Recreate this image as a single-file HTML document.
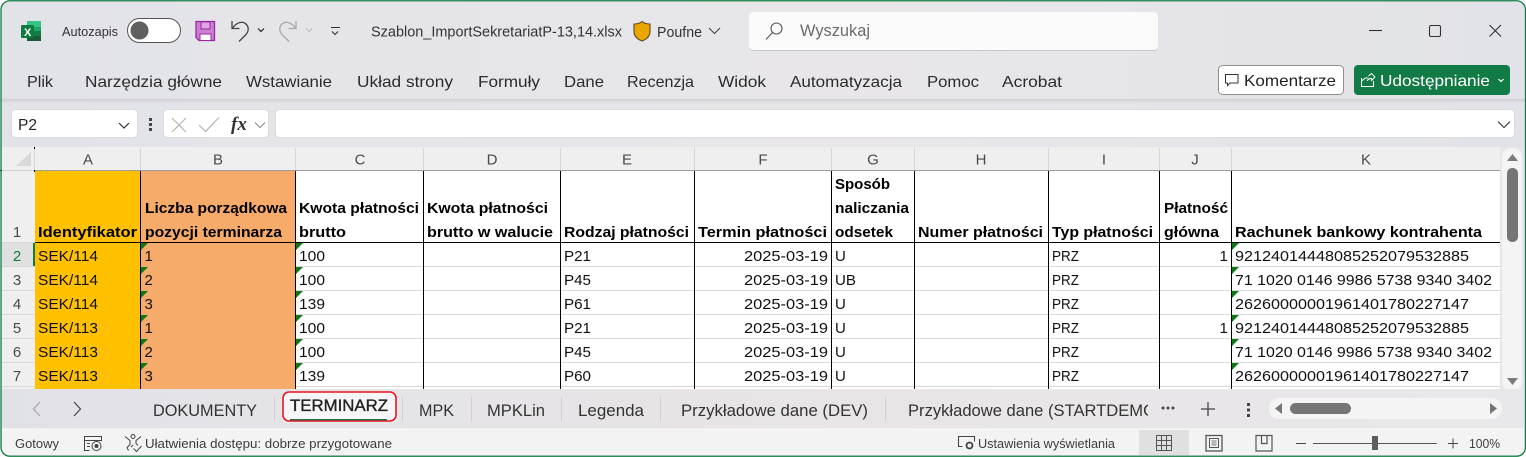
<!DOCTYPE html>
<html lang="pl"><head><meta charset="utf-8"><title>Excel</title>
<style>
html,body{margin:0;padding:0;background:#fff;overflow:hidden}
svg{display:block}
text{font-family:"Liberation Sans",sans-serif;fill:#262626;white-space:pre}
.r{font-size:16px;fill:#2b2b2b}
.g{font-size:15px;fill:#111}
.b{font-size:15px;font-weight:bold;fill:#000}
.h{font-size:15px;fill:#4a4a4a;text-anchor:middle}
.t{font-size:16.5px;fill:#333}
.s{font-size:13px;fill:#3c3c3c}
</style></head><body>
<svg xmlns="http://www.w3.org/2000/svg" width="1526" height="457" viewBox="0 0 1526 457">
<defs>
<linearGradient id="bg" x1="0" y1="0" x2="1" y2="0"><stop offset="0" stop-color="#E2E3E9"/><stop offset=".55" stop-color="#E8E6E9"/><stop offset="1" stop-color="#E2E3E8"/></linearGradient>
<linearGradient id="tb" x1="0" y1="0" x2="1" y2="0"><stop offset="0" stop-color="#E1E2E8"/><stop offset=".55" stop-color="#E9E5E6"/><stop offset="1" stop-color="#E8E7EA"/></linearGradient>
<linearGradient id="sh" x1="0" y1="0" x2="0" y2="1"><stop offset="0" stop-color="#cfcfd3"/><stop offset="1" stop-color="#E6E6EA"/></linearGradient>
<clipPath id="tc"><rect x="890" y="395" width="258" height="30"/></clipPath>
</defs>
<rect width="1526" height="457" fill="#fff"/>
<rect x="1" y="1" width="1524" height="455" rx="9" fill="url(#bg)"/>
<!-- ribbon shadow -->
<rect x="1" y="99" width="1524" height="5" fill="url(#sh)"/>

<!-- Excel logo -->
<g>
<rect x="27" y="21" width="14" height="20" rx="1" fill="#21A366"/>
<rect x="27" y="21" width="14" height="6" fill="#33C481"/>
<rect x="27" y="31" width="14" height="5" fill="#107C41"/>
<rect x="27" y="36" width="14" height="5" fill="#185C37"/>
<rect x="21" y="25" width="13" height="13" rx="1" fill="#0F7B42"/>
<text x="24" y="36" style="font-size:11px;font-weight:bold;fill:#fff">X</text>
</g>
<text x="62" y="36" textLength="56" lengthAdjust="spacingAndGlyphs" style="font-size:13px;fill:#333">Autozapis</text>
<!-- toggle -->
<rect x="127.5" y="18.5" width="53" height="24" rx="12" fill="#fff" stroke="#555" stroke-width="1"/>
<circle cx="139.5" cy="30.5" r="9" fill="#606060"/>
<!-- save -->
<path d="M196 21.5H214.5V40.5H199L196 37.5Z" fill="#CF7DD3" stroke="#9A28A2" stroke-width="1.3"/>
<rect x="201" y="22" width="9" height="7" fill="#DFA8E2" stroke="#9A28A2" stroke-width="1"/>
<rect x="200" y="34" width="11" height="6.5" fill="#fff" stroke="#9A28A2" stroke-width="1"/>
<!-- undo -->
<path d="M232 21v7.500h7.500" fill="none" stroke="#444" stroke-width="1.300"/>
<path d="M232.500 28c4-5.500 10-7.500 13.500-4 3.500 3.500 2.500 8-.5 11l-6.500 6.500" fill="none" stroke="#444" stroke-width="1.300"/>
<path d="M258 28.500l3 3 3-3" fill="none" stroke="#222" stroke-width="1.200"/>
<!-- redo -->
<path d="M296 21v7.500h-7.500" fill="none" stroke="#a8a8a8" stroke-width="1.300"/>
<path d="M295.500 28c-4-5.500-10-7.500-13.500-4-3.500 3.500-2.500 8 .5 11l6.500 6.500" fill="none" stroke="#a8a8a8" stroke-width="1.300"/>
<path d="M306 28.500l3 3 3-3" fill="none" stroke="#c0c0c0" stroke-width="1.200"/>
<!-- customize -->
<path d="M331 27.500h9M332 31.500l3 3 3-3" fill="none" stroke="#333" stroke-width="1.100"/>

<text x="371" y="36.500" textLength="251" lengthAdjust="spacingAndGlyphs" style="font-size:15px;fill:#333">Szablon_ImportSekretariatP-13,14.xlsx</text>
<!-- shield -->
<path d="M642 21.500c2 1.700 4.500 2.500 8 2.500v7.500c0 5-3.500 7.800-8 9.500-4.500-1.700-8-4.500-8-9.500V24c3.500 0 6-.8 8-2.500Z" fill="#EBA600" stroke="#5a4a20" stroke-width="1.100"/>
<text x="657" y="37" textLength="45" lengthAdjust="spacingAndGlyphs" style="font-size:15px;fill:#333">Poufne</text>
<path d="M709 28l5.500 5.500 5.500-5.500" fill="none" stroke="#444" stroke-width="1.100"/>

<!-- search -->
<rect x="749" y="12.500" width="409" height="38.500" rx="4" fill="#c9c9cd"/>
<rect x="749" y="12" width="409" height="38" rx="4" fill="#FAFAFA"/>
<circle cx="776.500" cy="28.500" r="5.500" fill="none" stroke="#555" stroke-width="1.100"/>
<path d="M772.500 32.500l-6.500 7" stroke="#555" stroke-width="1.100" fill="none"/>
<text x="800" y="36" textLength="70" lengthAdjust="spacingAndGlyphs" style="font-size:17px;fill:#6b6b6b">Wyszukaj</text>

<!-- window controls -->
<path d="M1369 30.500h13" stroke="#333" stroke-width="1.100"/>
<rect x="1429.500" y="25.500" width="11" height="11" rx="1.500" fill="none" stroke="#333" stroke-width="1.100"/>
<path d="M1489.500 25l11.500 11.500M1501 25l-11.500 11.500" stroke="#333" stroke-width="1.100"/>

<!-- ribbon tabs -->
<text class="r" x="27" y="87" textLength="26" lengthAdjust="spacingAndGlyphs">Plik</text>
<text class="r" x="85" y="87" textLength="137" lengthAdjust="spacingAndGlyphs">Narzędzia główne</text>
<text class="r" x="246" y="87" textLength="86" lengthAdjust="spacingAndGlyphs">Wstawianie</text>
<text class="r" x="357" y="87" textLength="96" lengthAdjust="spacingAndGlyphs">Układ strony</text>
<text class="r" x="478" y="87" textLength="62" lengthAdjust="spacingAndGlyphs">Formuły</text>
<text class="r" x="564" y="87" textLength="40" lengthAdjust="spacingAndGlyphs">Dane</text>
<text class="r" x="627" y="87" textLength="67" lengthAdjust="spacingAndGlyphs">Recenzja</text>
<text class="r" x="718" y="87" textLength="48" lengthAdjust="spacingAndGlyphs">Widok</text>
<text class="r" x="790" y="87" textLength="112" lengthAdjust="spacingAndGlyphs">Automatyzacja</text>
<text class="r" x="927" y="87" textLength="52" lengthAdjust="spacingAndGlyphs">Pomoc</text>
<text class="r" x="1002" y="87" textLength="60" lengthAdjust="spacingAndGlyphs">Acrobat</text>

<!-- Komentarze -->
<rect x="1218.500" y="65.500" width="125" height="29" rx="4" fill="#fff" stroke="#8f8f8f"/>
<path d="M1225.500 74.500h12.500v8.500h-8l-2.500 2.500v-2.500h-2Z" fill="none" stroke="#333" stroke-width="1"/>
<text x="1244" y="86" textLength="92" lengthAdjust="spacingAndGlyphs" style="font-size:16px;fill:#222">Komentarze</text>
<!-- Udostepnianie -->
<rect x="1354" y="65" width="156" height="30" rx="4" fill="#127B45"/>
<path d="M1361.500 78v8.500h12V81M1361.500 81l4-3h3M1368.500 76l3-2.500 3.500 3.500-3.500 3.500v-2c-2 0-3.500.8-4.500 2.500" fill="none" stroke="#fff" stroke-width="1"/>
<text x="1380" y="86" textLength="110" lengthAdjust="spacingAndGlyphs" style="font-size:16px;fill:#fff">Udostępnianie</text>
<path d="M1498.500 79l2.500 2.500 2.500-2.500" fill="none" stroke="#fff" stroke-width="1.200"/>

<!-- formula bar -->
<rect x="11.500" y="109.500" width="126" height="28" rx="4" fill="#fff" stroke="#dcdcdc"/>
<text x="18" y="130" textLength="19" lengthAdjust="spacingAndGlyphs" style="font-size:16px;fill:#222">P2</text>
<path d="M119 123l5 5 5-5" fill="none" stroke="#333" stroke-width="1.200"/>
<rect x="149" y="118" width="3" height="3" fill="#444"/><rect x="149" y="123" width="3" height="3" fill="#444"/><rect x="149" y="128" width="3" height="3" fill="#444"/>
<rect x="163.500" y="109.500" width="105" height="28" rx="4" fill="#fff" stroke="#dcdcdc"/>
<path d="M172 118l14 14M186 118l-14 14" stroke="#b4b4b4" stroke-width="1.200"/>
<path d="M199 125l6.500 6.500 13.500-14" fill="none" stroke="#b4b4b4" stroke-width="1.200"/>
<text x="231" y="130" style="font-family:'Liberation Serif',serif;font-size:19px;font-style:italic;font-weight:bold;fill:#333">fx</text>
<path d="M255 122.500l5 5 5-5" fill="none" stroke="#888" stroke-width="1.100"/>
<rect x="275.500" y="109.500" width="1239" height="28" rx="4" fill="#fff" stroke="#dcdcdc"/>
<path d="M1498 121.500l6 6 6-6" fill="none" stroke="#333" stroke-width="1.100"/>

<!-- grid header -->
<rect x="2" y="147" width="1498" height="24" fill="#EFEFEF"/>
<rect x="2" y="171" width="33" height="218" fill="#EFEFEF"/>
<path d="M31 152v14H16Z" fill="#D9D9D9"/>
<rect x="2" y="243" width="32" height="24" fill="#E0E0E0"/>
<rect x="33" y="243" width="2" height="24" fill="#107C41"/>
<!-- cells -->
<rect x="35" y="171" width="1465" height="218" fill="#fff"/>
<rect x="35" y="171" width="106" height="218" fill="#FFC000"/>
<rect x="141" y="171" width="155" height="218" fill="#F7AB6A"/>
<!-- horizontal lines -->
<g fill="#D8D8D8">
<rect x="2" y="266" width="33" height="1"/><rect x="296" y="266" width="1204" height="1"/>
<rect x="2" y="290" width="33" height="1"/><rect x="296" y="290" width="1204" height="1"/>
<rect x="2" y="314" width="33" height="1"/><rect x="296" y="314" width="1204" height="1"/>
<rect x="2" y="338" width="33" height="1"/><rect x="296" y="338" width="1204" height="1"/>
<rect x="2" y="362" width="33" height="1"/><rect x="296" y="362" width="1204" height="1"/>
<rect x="2" y="386" width="33" height="1"/><rect x="296" y="386" width="1204" height="1"/>
<rect x="2" y="242" width="33" height="1"/>
</g>
<rect x="35" y="170" width="1465" height="1" fill="#9d9d9d"/>
<rect x="2" y="170" width="33" height="1" fill="#d0d0d0"/>
<rect x="35" y="242" width="1465" height="1" fill="#000"/>
<!-- vertical header separators -->
<g fill="#D6D6D6">
<rect x="34" y="148" width="1" height="22"/><rect x="140" y="148" width="1" height="22"/><rect x="295" y="148" width="1" height="22"/><rect x="423" y="148" width="1" height="22"/><rect x="560" y="148" width="1" height="22"/><rect x="694" y="148" width="1" height="22"/><rect x="831" y="148" width="1" height="22"/><rect x="914" y="148" width="1" height="22"/><rect x="1048" y="148" width="1" height="22"/><rect x="1159" y="148" width="1" height="22"/><rect x="1231" y="148" width="1" height="22"/>
</g>
<!-- black borders -->
<g fill="#000">
<rect x="140" y="171" width="1" height="218"/><rect x="295" y="171" width="1" height="218"/><rect x="423" y="171" width="1" height="218"/><rect x="560" y="171" width="1" height="218"/><rect x="694" y="171" width="1" height="218"/><rect x="831" y="171" width="1" height="218"/><rect x="914" y="171" width="1" height="218"/><rect x="1048" y="171" width="1" height="218"/><rect x="1159" y="171" width="1" height="218"/><rect x="1231" y="171" width="1" height="218"/>
<rect x="34" y="147" width="1" height="2"/><rect x="0" y="170" width="2" height="1"/><rect x="34" y="170" width="1" height="2"/>
</g>
<!-- triangles -->
<g fill="#0B7A12">
<path d="M141 243h7l-7 7Z"/><path d="M296 243h7l-7 7Z"/><path d="M1232 243h7l-7 7Z"/>
<path d="M141 267h7l-7 7Z"/><path d="M296 267h7l-7 7Z"/><path d="M1232 267h7l-7 7Z"/>
<path d="M141 291h7l-7 7Z"/><path d="M296 291h7l-7 7Z"/><path d="M1232 291h7l-7 7Z"/>
<path d="M141 315h7l-7 7Z"/><path d="M296 315h7l-7 7Z"/><path d="M1232 315h7l-7 7Z"/>
<path d="M141 339h7l-7 7Z"/><path d="M296 339h7l-7 7Z"/><path d="M1232 339h7l-7 7Z"/>
<path d="M141 363h7l-7 7Z"/><path d="M296 363h7l-7 7Z"/><path d="M1232 363h7l-7 7Z"/>
</g>
<!-- col letters -->
<text class="h" x="88" y="164.500">A</text><text class="h" x="218" y="164.500">B</text><text class="h" x="360" y="164.500">C</text><text class="h" x="492" y="164.500">D</text><text class="h" x="627" y="164.500">E</text><text class="h" x="763" y="164.500">F</text><text class="h" x="873" y="164.500">G</text><text class="h" x="981" y="164.500">H</text><text class="h" x="1104" y="164.500">I</text><text class="h" x="1195" y="164.500">J</text><text class="h" x="1366" y="164.500">K</text>
<!-- row numbers -->
<text class="h" x="17" y="237">1</text><text class="h" x="17" y="261" style="fill:#107C41">2</text><text class="h" x="17" y="285">3</text><text class="h" x="17" y="309">4</text><text class="h" x="17" y="333">5</text><text class="h" x="17" y="357">6</text><text class="h" x="17" y="381">7</text>
<!-- header cells -->
<text class="b" x="38" y="237" textLength="99" lengthAdjust="spacingAndGlyphs">Identyfikator</text>
<text class="b" x="145" y="213" textLength="142" lengthAdjust="spacingAndGlyphs">Liczba porządkowa</text>
<text class="b" x="145" y="237" textLength="137" lengthAdjust="spacingAndGlyphs">pozycji terminarza</text>
<text class="b" x="299" y="213" textLength="120" lengthAdjust="spacingAndGlyphs">Kwota płatności</text>
<text class="b" x="299" y="237" textLength="47" lengthAdjust="spacingAndGlyphs">brutto</text>
<text class="b" x="427" y="213" textLength="121" lengthAdjust="spacingAndGlyphs">Kwota płatności</text>
<text class="b" x="427" y="237" textLength="126" lengthAdjust="spacingAndGlyphs">brutto w walucie</text>
<text class="b" x="564" y="237" textLength="125" lengthAdjust="spacingAndGlyphs">Rodzaj płatności</text>
<text class="b" x="698" y="237" textLength="129" lengthAdjust="spacingAndGlyphs">Termin płatności</text>
<text class="b" x="835" y="189" textLength="55" lengthAdjust="spacingAndGlyphs">Sposób</text>
<text class="b" x="835" y="213" textLength="74" lengthAdjust="spacingAndGlyphs">naliczania</text>
<text class="b" x="835" y="237" textLength="58" lengthAdjust="spacingAndGlyphs">odsetek</text>
<text class="b" x="918" y="237" textLength="125" lengthAdjust="spacingAndGlyphs">Numer płatności</text>
<text class="b" x="1052" y="237" textLength="101" lengthAdjust="spacingAndGlyphs">Typ płatności</text>
<text class="b" x="1164" y="213" textLength="64" lengthAdjust="spacingAndGlyphs">Płatność</text>
<text class="b" x="1164" y="237" textLength="55" lengthAdjust="spacingAndGlyphs">główna</text>
<text class="b" x="1235" y="237" textLength="247" lengthAdjust="spacingAndGlyphs">Rachunek bankowy kontrahenta</text>
<!-- row 2 -->
<text class="g" x="38" y="261" textLength="60" lengthAdjust="spacingAndGlyphs">SEK/114</text><text class="g" x="144.500" y="261">1</text><text class="g" x="299" y="261" textLength="26" lengthAdjust="spacingAndGlyphs">100</text><text class="g" x="564" y="261" textLength="27" lengthAdjust="spacingAndGlyphs">P21</text><text class="g" x="744" y="261" textLength="84" lengthAdjust="spacingAndGlyphs">2025-03-19</text><text class="g" x="835" y="261">U</text><text class="g" x="1052" y="261" textLength="27" lengthAdjust="spacingAndGlyphs">PRZ</text><text class="g" x="1219.500" y="261">1</text><text class="g" x="1235" y="261" textLength="234" lengthAdjust="spacingAndGlyphs">92124014448085252079532885</text>
<!-- row 3 -->
<text class="g" x="38" y="285" textLength="60" lengthAdjust="spacingAndGlyphs">SEK/114</text><text class="g" x="144.500" y="285">2</text><text class="g" x="299" y="285" textLength="26" lengthAdjust="spacingAndGlyphs">100</text><text class="g" x="564" y="285" textLength="27" lengthAdjust="spacingAndGlyphs">P45</text><text class="g" x="744" y="285" textLength="84" lengthAdjust="spacingAndGlyphs">2025-03-19</text><text class="g" x="835" y="285" textLength="21" lengthAdjust="spacingAndGlyphs">UB</text><text class="g" x="1052" y="285" textLength="27" lengthAdjust="spacingAndGlyphs">PRZ</text><text class="g" x="1235" y="285" textLength="257" lengthAdjust="spacingAndGlyphs">71 1020 0146 9986 5738 9340 3402</text>
<!-- row 4 -->
<text class="g" x="38" y="309" textLength="60" lengthAdjust="spacingAndGlyphs">SEK/114</text><text class="g" x="144.500" y="309">3</text><text class="g" x="299" y="309" textLength="26" lengthAdjust="spacingAndGlyphs">139</text><text class="g" x="564" y="309" textLength="27" lengthAdjust="spacingAndGlyphs">P61</text><text class="g" x="744" y="309" textLength="84" lengthAdjust="spacingAndGlyphs">2025-03-19</text><text class="g" x="835" y="309">U</text><text class="g" x="1052" y="309" textLength="27" lengthAdjust="spacingAndGlyphs">PRZ</text><text class="g" x="1235" y="309" textLength="234" lengthAdjust="spacingAndGlyphs">26260000001961401780227147</text>
<!-- row 5 -->
<text class="g" x="38" y="333" textLength="60" lengthAdjust="spacingAndGlyphs">SEK/113</text><text class="g" x="144.500" y="333">1</text><text class="g" x="299" y="333" textLength="26" lengthAdjust="spacingAndGlyphs">100</text><text class="g" x="564" y="333" textLength="27" lengthAdjust="spacingAndGlyphs">P21</text><text class="g" x="744" y="333" textLength="84" lengthAdjust="spacingAndGlyphs">2025-03-19</text><text class="g" x="835" y="333">U</text><text class="g" x="1052" y="333" textLength="27" lengthAdjust="spacingAndGlyphs">PRZ</text><text class="g" x="1219.500" y="333">1</text><text class="g" x="1235" y="333" textLength="234" lengthAdjust="spacingAndGlyphs">92124014448085252079532885</text>
<!-- row 6 -->
<text class="g" x="38" y="357" textLength="60" lengthAdjust="spacingAndGlyphs">SEK/113</text><text class="g" x="144.500" y="357">2</text><text class="g" x="299" y="357" textLength="26" lengthAdjust="spacingAndGlyphs">100</text><text class="g" x="564" y="357" textLength="27" lengthAdjust="spacingAndGlyphs">P45</text><text class="g" x="744" y="357" textLength="84" lengthAdjust="spacingAndGlyphs">2025-03-19</text><text class="g" x="835" y="357">U</text><text class="g" x="1052" y="357" textLength="27" lengthAdjust="spacingAndGlyphs">PRZ</text><text class="g" x="1235" y="357" textLength="257" lengthAdjust="spacingAndGlyphs">71 1020 0146 9986 5738 9340 3402</text>
<!-- row 7 -->
<text class="g" x="38" y="381" textLength="60" lengthAdjust="spacingAndGlyphs">SEK/113</text><text class="g" x="144.500" y="381">3</text><text class="g" x="299" y="381" textLength="26" lengthAdjust="spacingAndGlyphs">139</text><text class="g" x="564" y="381" textLength="27" lengthAdjust="spacingAndGlyphs">P60</text><text class="g" x="744" y="381" textLength="84" lengthAdjust="spacingAndGlyphs">2025-03-19</text><text class="g" x="835" y="381">U</text><text class="g" x="1052" y="381" textLength="27" lengthAdjust="spacingAndGlyphs">PRZ</text><text class="g" x="1235" y="381" textLength="234" lengthAdjust="spacingAndGlyphs">26260000001961401780227147</text>

<!-- v scrollbar -->
<rect x="1500" y="147" width="25" height="243" fill="#E6E6EA"/>
<rect x="1502" y="148" width="20" height="243" rx="9" fill="#F4F4F4"/>
<path d="M1512.500 154l5.500 7h-11Z" fill="#7a7a7a"/>
<rect x="1507" y="168" width="11" height="74" rx="5" fill="#757575"/>
<path d="M1507 378h11l-5.500 7Z" fill="#7a7a7a"/>

<!-- tab bar -->
<rect x="2" y="389" width="1522" height="40" fill="url(#tb)"/>
<path d="M40 402l-6.500 7 6.500 7" fill="none" stroke="#a5a5a5" stroke-width="1.200"/>
<path d="M74 402l6.500 7-6.500 7" fill="none" stroke="#444" stroke-width="1.200"/>
<text class="t" x="153" y="416" textLength="104" lengthAdjust="spacingAndGlyphs">DOKUMENTY</text>
<rect x="274" y="397" width="1" height="24" fill="#cfcfd3"/>
<rect x="281" y="392" width="118" height="31" rx="6" fill="#e9e9ec"/>
<rect x="283" y="392" width="113" height="29" rx="6" fill="#F6F6F7" stroke="#E8141F" stroke-width="1.600"/>
<text x="290" y="411" textLength="98" lengthAdjust="spacingAndGlyphs" style="font-size:16.5px;fill:#222;stroke:#222;stroke-width:.35">TERMINARZ</text>
<rect x="290" y="419" width="97" height="1.500" fill="#2f6b48"/>
<rect x="402" y="397" width="1" height="24" fill="#cfcfd3"/>
<text class="t" x="419" y="416" textLength="35" lengthAdjust="spacingAndGlyphs">MPK</text>
<rect x="471" y="397" width="1" height="24" fill="#cfcfd3"/>
<text class="t" x="487" y="416" textLength="58" lengthAdjust="spacingAndGlyphs">MPKLin</text>
<rect x="561" y="397" width="1" height="24" fill="#cfcfd3"/>
<text class="t" x="578" y="416" textLength="66" lengthAdjust="spacingAndGlyphs">Legenda</text>
<rect x="660" y="397" width="1" height="24" fill="#cfcfd3"/>
<text class="t" x="681" y="416" textLength="187" lengthAdjust="spacingAndGlyphs">Przykładowe dane (DEV)</text>
<rect x="885" y="397" width="1" height="24" fill="#cfcfd3"/>
<g clip-path="url(#tc)"><text class="t" x="908" y="416" textLength="248" lengthAdjust="spacingAndGlyphs">Przykładowe dane (STARTDEMO</text></g>
<circle cx="1163" cy="408" r="1.500" fill="#444"/><circle cx="1168" cy="408" r="1.500" fill="#444"/><circle cx="1173" cy="408" r="1.500" fill="#444"/>
<path d="M1208 402v14M1201 409h14" stroke="#444" stroke-width="1.300"/>
<rect x="1247" y="403" width="3" height="3" fill="#444"/><rect x="1247" y="408.500" width="3" height="3" fill="#444"/><rect x="1247" y="414" width="3" height="3" fill="#444"/>
<!-- h scrollbar -->
<rect x="1269" y="398" width="233" height="21" rx="10" fill="#F4F4F4"/>
<path d="M1275 408.500l7-5.500v11Z" fill="#757575"/>
<rect x="1290" y="403" width="61" height="11" rx="5.500" fill="#757575"/>
<path d="M1497 408.500l-7-5.500v11Z" fill="#757575"/>

<!-- status bar -->
<rect x="2" y="429" width="1522" height="26" fill="#F3F3F3"/>
<rect x="2" y="428.500" width="1522" height="1" fill="#fafafa"/>
<text class="s" x="15" y="448" textLength="44" lengthAdjust="spacingAndGlyphs">Gotowy</text>
<path d="M84.500 436.500h17v4h-17ZM84.500 440.500v10h5" fill="none" stroke="#444" stroke-width="1"/>
<path d="M87 443.500h3M87 446.500h3" stroke="#444" stroke-width="1"/>
<circle cx="96.500" cy="446" r="4.500" fill="none" stroke="#444" stroke-width="1"/><circle cx="96.500" cy="446" r="2" fill="#444"/>
<circle cx="133" cy="436.500" r="2" fill="none" stroke="#444" stroke-width="1"/>
<path d="M125 436.500l5 4v4l-3 3 1.500 3M141 436.500l-5 4v3l2 2M133 445l-2 2" fill="none" stroke="#444" stroke-width="1"/>
<path d="M133.500 448.500l3 3 5-5.500" fill="none" stroke="#444" stroke-width="1"/>
<text class="s" x="145" y="448" textLength="247" lengthAdjust="spacingAndGlyphs">Ułatwienia dostępu: dobrze przygotowane</text>
<path d="M962.500 446.500h-4v-10h16v5" fill="none" stroke="#444" stroke-width="1.100"/>
<circle cx="969.500" cy="445.500" r="3" fill="none" stroke="#444" stroke-width="1.800"/>
<text class="s" x="978" y="448" textLength="137" lengthAdjust="spacingAndGlyphs">Ustawienia wyświetlania</text>
<rect x="1139" y="430" width="50" height="25" fill="#E0E0E0"/>
<path d="M1156.500 435.500h15v15h-15ZM1161.500 435.500v15M1166.500 435.500v15M1156.500 440.500h15M1156.500 445.500h15" fill="none" stroke="#555" stroke-width="1"/>
<rect x="1206" y="435.500" width="16" height="15.500" fill="none" stroke="#555" stroke-width="1.300"/>
<rect x="1209.500" y="438.500" width="9" height="9" fill="none" stroke="#555" stroke-width="1"/>
<path d="M1211.500 441h5M1211.500 443h5M1211.500 445h5" stroke="#555" stroke-width=".8"/>
<path d="M1256 435.500h16v15.500h-16ZM1261.500 435.500v8h5.500v-8" fill="none" stroke="#555" stroke-width="1.200"/>
<path d="M1296 443.500h10" stroke="#444" stroke-width="1"/>
<rect x="1313" y="443" width="124" height="1" fill="#555"/>
<rect x="1372" y="436" width="6" height="14" fill="#5e5e5e"/>
<path d="M1448 443.500h10M1453 438.500v10" stroke="#444" stroke-width="1"/>
<text class="s" x="1469" y="448" textLength="31" lengthAdjust="spacingAndGlyphs">100%</text>

<!-- window border -->
<rect x="1" y=".75" width="1524.500" height="455.500" rx="9" fill="none" stroke="#107C41" stroke-width="1.300"/>
</svg>
</body></html>
